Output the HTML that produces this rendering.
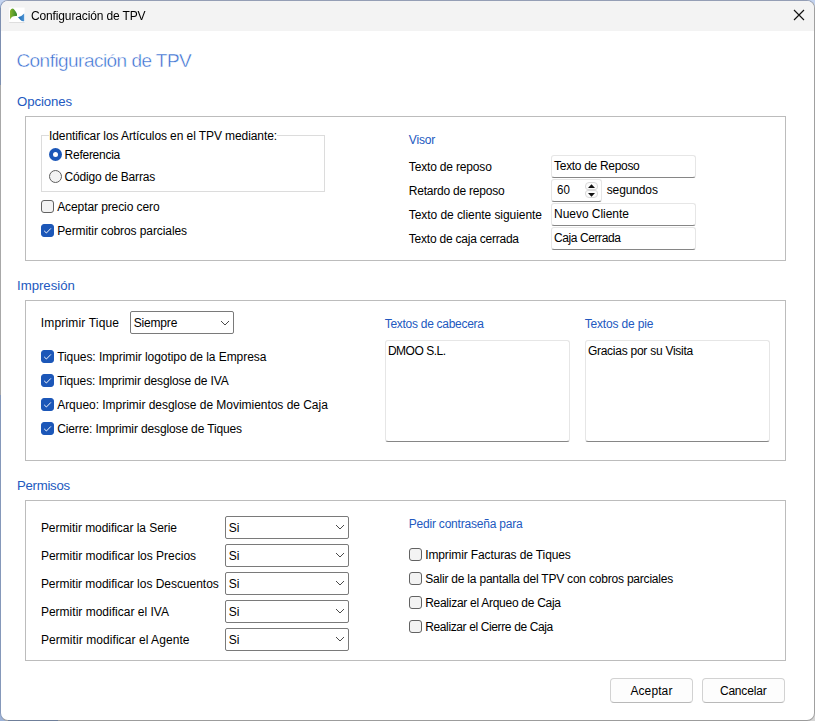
<!DOCTYPE html><html><head><meta charset="utf-8"><title>Configuración de TPV</title><style>
html,body{margin:0;padding:0}
body{width:815px;height:721px;overflow:hidden;position:relative;background:#c4d4f0;font-family:"Liberation Sans", sans-serif;font-size:12px;color:#000}
.a{position:absolute}
.t{position:absolute;white-space:pre;line-height:16px;height:16px}
#win{left:0;top:0;width:813px;height:719px;border:1px solid;border-color:#949eb5 #a0a0a0 #9c9c9c #8598ba;border-radius:8px;background:#fff;overflow:hidden}
.cn{width:10px;height:10px}
#tb{left:0;top:0;width:813px;height:30px;background:#f3f3f3}
.panel{border:1px solid #bcbcbc;box-sizing:border-box}
.gb{border:1px solid #dcdcdc;box-sizing:border-box}
.in{box-sizing:border-box;border:1px solid #e6e6e6;border-bottom:1px solid #868686;border-radius:3px;background:#fff}
.cb{box-sizing:border-box;border:1px solid #7a7a7a;border-radius:2px;background:#fff}
.ck{box-sizing:border-box;width:13px;height:13px;border:1px solid #626262;border-radius:3px;background:#f3f3f3}
.ck.on{border-color:#1c57b8;background:#1c57b8}
.btn{box-sizing:border-box;border:1px solid #d2d2d2;border-bottom-color:#b9b9b9;border-radius:4px;background:#fdfdfd}

</style></head><body>
<div class="a cn" style="left:0;bottom:0;background:#9db3d8"></div><div class="a cn" style="right:0;bottom:0;background:#d5d5d5"></div>
<div id="win" class="a"><div id="tb" class="a"></div></div>
<div class="a" style="left:0;top:8px;width:1px;height:77px;background:#7d8fb0"></div><div class="a" style="left:0;top:85px;width:1px;height:310px;background:#a8a8a8"></div><div class="a" style="left:8px;top:720px;width:50px;height:1px;background:#6f7f9a"></div>
<svg class="a" style="left:0;top:0" width="32" height="30" viewBox="0 0 32 30"><defs><linearGradient id="gg" x1="0" y1="0" x2="1" y2="0"><stop offset="0" stop-color="#86b52c"/><stop offset="1" stop-color="#34872f"/></linearGradient><linearGradient id="gb" x1="0" y1="0" x2="1" y2="0"><stop offset="0" stop-color="#1a66ad"/><stop offset="1" stop-color="#4d95d6"/></linearGradient></defs><rect x="9.2" y="7.6" width="15.4" height="15" fill="#fff"/><rect x="9.2" y="22" width="15.4" height="0.8" fill="#d8d8d8"/><path d="M10 19.4 L10 10.8 Q11 8.6 12.8 8.5 Q14.6 9 17 14 L16.9 16.1 Q12 15.4 10 19.4Z" fill="url(#gg)"/><path d="M24.2 13.5 L24.2 21.2 Q22 21.6 20.5 20.1 Q19 18.6 18 17.3 Q21.5 16.6 24.2 13.5Z" fill="url(#gb)"/></svg>
<svg class="a" style="left:793px;top:9px" width="12" height="12" viewBox="0 0 12 12"><path d="M1 1 L11 11 M11 1 L1 11" stroke="#111" stroke-width="1.15" fill="none"/></svg>
<div class="a panel" style="left:25px;top:116px;width:761px;height:145px;"></div>
<div class="a panel" style="left:25px;top:300px;width:761px;height:161px;"></div>
<div class="a panel" style="left:25px;top:500px;width:761px;height:161px;"></div>
<div class="a gb" style="left:41px;top:135px;width:284px;height:57px;"></div>
<div class="a in" style="left:551px;top:155px;width:145px;height:23px;"></div>
<div class="a in" style="left:551px;top:203px;width:145px;height:23px;"></div>
<div class="a in" style="left:551px;top:227px;width:145px;height:23px;"></div>
<div class="a in" style="left:551px;top:179px;width:51px;height:23px;"></div>
<div class="a in" style="left:385px;top:340px;width:185px;height:102px;"></div>
<div class="a in" style="left:585px;top:340px;width:185px;height:102px;"></div>
<div class="a cb" style="left:130px;top:311px;width:104px;height:23px;"></div>
<svg class="a" style="left:220px;top:319.8px" width="10" height="7" viewBox="0 0 10 7"><path d="M1 1 L5 5 L9 1" stroke="#4a4a4a" stroke-width="1" fill="none"/></svg>
<div class="a cb" style="left:225px;top:516px;width:124px;height:23px;"></div>
<svg class="a" style="left:335.3px;top:524.4px" width="10" height="7" viewBox="0 0 10 7"><path d="M1 1 L5 5 L9 1" stroke="#4a4a4a" stroke-width="1" fill="none"/></svg>
<div class="a cb" style="left:225px;top:544px;width:124px;height:23px;"></div>
<svg class="a" style="left:335.3px;top:552.4px" width="10" height="7" viewBox="0 0 10 7"><path d="M1 1 L5 5 L9 1" stroke="#4a4a4a" stroke-width="1" fill="none"/></svg>
<div class="a cb" style="left:225px;top:572px;width:124px;height:23px;"></div>
<svg class="a" style="left:335.3px;top:580.4px" width="10" height="7" viewBox="0 0 10 7"><path d="M1 1 L5 5 L9 1" stroke="#4a4a4a" stroke-width="1" fill="none"/></svg>
<div class="a cb" style="left:225px;top:600px;width:124px;height:23px;"></div>
<svg class="a" style="left:335.3px;top:608.4px" width="10" height="7" viewBox="0 0 10 7"><path d="M1 1 L5 5 L9 1" stroke="#4a4a4a" stroke-width="1" fill="none"/></svg>
<div class="a cb" style="left:225px;top:628px;width:124px;height:23px;"></div>
<svg class="a" style="left:335.3px;top:636.4px" width="10" height="7" viewBox="0 0 10 7"><path d="M1 1 L5 5 L9 1" stroke="#4a4a4a" stroke-width="1" fill="none"/></svg>
<div class="a" style="left:585px;top:182px;width:13px;height:8px;box-sizing:border-box;border:1px solid #dadada;border-radius:4px 4px 3px 3px;background:#fbfbfb"></div>
<div class="a" style="left:585px;top:190px;width:13px;height:8px;box-sizing:border-box;border:1px solid #dadada;border-radius:3px 3px 4px 4px;background:#fbfbfb"></div>
<svg class="a" style="left:587px;top:183px" width="9" height="14" viewBox="0 0 9 14"><path d="M1 5 L4.5 1.2 L8 5Z M1 10 L4.5 13.8 L8 10Z" fill="#111"/></svg>
<div class="a ck" style="left:41px;top:200px"></div>
<div class="a ck on" style="left:41px;top:224px"></div><svg class="a" style="left:41px;top:224px" width="13" height="13" viewBox="0 0 13 13"><path d="M3.2 6.9 L5.4 9 L9.9 4.4" stroke="#fff" stroke-width="0.95" fill="none"/></svg>
<div class="a ck on" style="left:41px;top:350px"></div><svg class="a" style="left:41px;top:350px" width="13" height="13" viewBox="0 0 13 13"><path d="M3.2 6.9 L5.4 9 L9.9 4.4" stroke="#fff" stroke-width="0.95" fill="none"/></svg>
<div class="a ck on" style="left:41px;top:374px"></div><svg class="a" style="left:41px;top:374px" width="13" height="13" viewBox="0 0 13 13"><path d="M3.2 6.9 L5.4 9 L9.9 4.4" stroke="#fff" stroke-width="0.95" fill="none"/></svg>
<div class="a ck on" style="left:41px;top:398px"></div><svg class="a" style="left:41px;top:398px" width="13" height="13" viewBox="0 0 13 13"><path d="M3.2 6.9 L5.4 9 L9.9 4.4" stroke="#fff" stroke-width="0.95" fill="none"/></svg>
<div class="a ck on" style="left:41px;top:422px"></div><svg class="a" style="left:41px;top:422px" width="13" height="13" viewBox="0 0 13 13"><path d="M3.2 6.9 L5.4 9 L9.9 4.4" stroke="#fff" stroke-width="0.95" fill="none"/></svg>
<div class="a ck" style="left:409px;top:548px"></div>
<div class="a ck" style="left:409px;top:572px"></div>
<div class="a ck" style="left:409px;top:596px"></div>
<div class="a ck" style="left:409px;top:620px"></div>
<div class="a" style="left:49px;top:148px;width:13px;height:13px;box-sizing:border-box;border-radius:50%;background:#1c57b8"></div><div class="a" style="left:53px;top:152px;width:5px;height:5px;border-radius:50%;background:#fff"></div>
<div class="a" style="left:49px;top:170px;width:13px;height:13px;box-sizing:border-box;border-radius:50%;border:1px solid #5e5e5e;background:#f3f3f3"></div>
<div class="a btn" style="left:610px;top:678px;width:83px;height:25px;"></div>
<div class="a btn" style="left:702px;top:678px;width:83px;height:25px;"></div>
<span class="t" style="left:30.6px;top:8px;font-size:12px;color:#000;letter-spacing:-0.139px;will-change:transform;">Configuración de TPV</span>
<span class="t" style="left:16.4px;top:53px;font-size:19px;color:#336ad0;letter-spacing:-0.537px;-webkit-text-stroke:0.45px #fff;">Configuración de TPV</span>
<span class="t" style="left:17.0px;top:94px;font-size:13.2px;color:#2259c0;letter-spacing:-0.090px;">Opciones</span>
<span class="t" style="left:17.0px;top:278px;font-size:13.2px;color:#2259c0;letter-spacing:-0.012px;">Impresión</span>
<span class="t" style="left:17.0px;top:478px;font-size:13.2px;color:#2259c0;letter-spacing:-0.271px;">Permisos</span>
<span class="t" style="left:49.0px;top:128px;font-size:12px;color:#000;letter-spacing:-0.087px;background:#fff;">Identificar los Artículos en el TPV mediante:</span>
<span class="t" style="left:64.6px;top:147px;font-size:12px;color:#000;letter-spacing:-0.263px;">Referencia</span>
<span class="t" style="left:64.6px;top:169px;font-size:12px;color:#000;letter-spacing:-0.187px;">Código de Barras</span>
<span class="t" style="left:57.2px;top:199px;font-size:12px;color:#000;letter-spacing:-0.093px;">Aceptar precio cero</span>
<span class="t" style="left:57.2px;top:223px;font-size:12px;color:#000;letter-spacing:-0.090px;">Permitir cobros parciales</span>
<span class="t" style="left:408.8px;top:132px;font-size:12px;color:#2259c0;letter-spacing:-0.185px;">Visor</span>
<span class="t" style="left:408.8px;top:159px;font-size:12px;color:#000;letter-spacing:-0.166px;">Texto de reposo</span>
<span class="t" style="left:408.8px;top:183px;font-size:12px;color:#000;letter-spacing:-0.224px;">Retardo de reposo</span>
<span class="t" style="left:408.8px;top:207px;font-size:12px;color:#000;letter-spacing:-0.064px;">Texto de cliente siguiente</span>
<span class="t" style="left:408.8px;top:231px;font-size:12px;color:#000;letter-spacing:-0.225px;">Texto de caja cerrada</span>
<span class="t" style="left:554.1px;top:158px;font-size:12px;color:#000;letter-spacing:-0.311px;">Texto de Reposo</span>
<span class="t" style="left:556.6px;top:182px;font-size:13px;color:#000;transform:scaleX(0.885);transform-origin:0 0">60</span>
<span class="t" style="left:606.7px;top:182px;font-size:12px;color:#000;letter-spacing:-0.118px;">segundos</span>
<span class="t" style="left:554.1px;top:206px;font-size:12px;color:#000;letter-spacing:-0.044px;">Nuevo Cliente</span>
<span class="t" style="left:554.1px;top:230px;font-size:12px;color:#000;letter-spacing:-0.415px;">Caja Cerrada</span>
<span class="t" style="left:40.8px;top:315px;font-size:12px;color:#000;letter-spacing:0.170px;">Imprimir Tique</span>
<span class="t" style="left:133.7px;top:315px;font-size:12px;color:#000;letter-spacing:-0.170px;">Siempre</span>
<span class="t" style="left:57.2px;top:349px;font-size:12px;color:#000;letter-spacing:-0.065px;">Tiques: Imprimir logotipo de la Empresa</span>
<span class="t" style="left:57.2px;top:373px;font-size:12px;color:#000;letter-spacing:-0.125px;">Tiques: Imprimir desglose de IVA</span>
<span class="t" style="left:57.2px;top:397px;font-size:12px;color:#000;letter-spacing:-0.032px;">Arqueo: Imprimir desglose de Movimientos de Caja</span>
<span class="t" style="left:57.2px;top:421px;font-size:12px;color:#000;letter-spacing:-0.132px;">Cierre: Imprimir desglose de Tiques</span>
<span class="t" style="left:384.7px;top:316px;font-size:12px;color:#2259c0;letter-spacing:-0.281px;">Textos de cabecera</span>
<span class="t" style="left:584.7px;top:316px;font-size:12px;color:#2259c0;letter-spacing:-0.163px;">Textos de pie</span>
<span class="t" style="left:387.9px;top:343px;font-size:12px;color:#000;letter-spacing:-0.468px;">DMOO S.L.</span>
<span class="t" style="left:587.9px;top:343px;font-size:12px;color:#000;letter-spacing:-0.257px;">Gracias por su Visita</span>
<span class="t" style="left:40.9px;top:520px;font-size:12px;color:#000;letter-spacing:-0.047px;">Permitir modificar la Serie</span>
<span class="t" style="left:228.8px;top:520px;font-size:12px;color:#000;letter-spacing:0.064px;">Si</span>
<span class="t" style="left:40.9px;top:548px;font-size:12px;color:#000;letter-spacing:-0.006px;">Permitir modificar los Precios</span>
<span class="t" style="left:228.8px;top:548px;font-size:12px;color:#000;letter-spacing:0.064px;">Si</span>
<span class="t" style="left:40.9px;top:576px;font-size:12px;color:#000;letter-spacing:-0.025px;">Permitir modificar los Descuentos</span>
<span class="t" style="left:228.8px;top:576px;font-size:12px;color:#000;letter-spacing:0.064px;">Si</span>
<span class="t" style="left:40.9px;top:604px;font-size:12px;color:#000;letter-spacing:0.011px;">Permitir modificar el IVA</span>
<span class="t" style="left:228.8px;top:604px;font-size:12px;color:#000;letter-spacing:0.064px;">Si</span>
<span class="t" style="left:40.9px;top:632px;font-size:12px;color:#000;letter-spacing:0.070px;">Permitir modificar el Agente</span>
<span class="t" style="left:228.8px;top:632px;font-size:12px;color:#000;letter-spacing:0.064px;">Si</span>
<span class="t" style="left:408.7px;top:516px;font-size:12px;color:#2259c0;letter-spacing:-0.199px;">Pedir contraseña para</span>
<span class="t" style="left:425.2px;top:547px;font-size:12px;color:#000;letter-spacing:-0.119px;">Imprimir Facturas de Tiques</span>
<span class="t" style="left:425.2px;top:571px;font-size:12px;color:#000;letter-spacing:-0.205px;">Salir de la pantalla del TPV con cobros parciales</span>
<span class="t" style="left:425.2px;top:595px;font-size:12px;color:#000;letter-spacing:-0.276px;">Realizar el Arqueo de Caja</span>
<span class="t" style="left:425.2px;top:619px;font-size:12px;color:#000;letter-spacing:-0.373px;">Realizar el Cierre de Caja</span>
<span class="t" style="left:630.4px;top:683px;font-size:12px;color:#000;letter-spacing:0.106px;">Aceptar</span>
<span class="t" style="left:719.9px;top:683px;font-size:12px;color:#000;letter-spacing:-0.179px;">Cancelar</span>
</body></html>
